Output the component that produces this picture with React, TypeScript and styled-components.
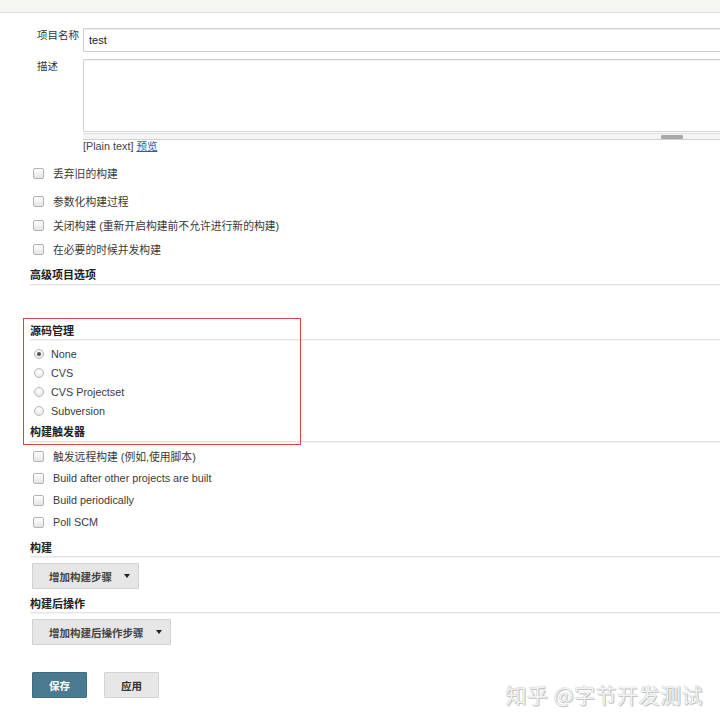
import React from 'react';
import styled, { createGlobalStyle } from 'styled-components';

const GlobalStyle = createGlobalStyle`
  html, body {
    margin: 0;
    padding: 0;
    background: #ffffff;
  }
  body {
    font-family: "Liberation Sans", Arial, "Noto Sans CJK SC", sans-serif;
    font-size: 10.8px;
    color: #3a3a3a;
    overflow: hidden;
  }
  * {
    box-sizing: border-box;
  }
`;

const Page = styled.div`
  position: relative;
  min-height: 726px;
  overflow: hidden;
`;

const TopBar = styled.div`
  height: 13px;
  background: #f6f7f2;
  border-bottom: 1px solid #e2e3de;
`;

const Form = styled.form`
  display: flex;
  flex-direction: column;
  padding: 15px 0 0 30px;
  margin-right: -20px;
`;

const FieldRow = styled.div<{ $top?: number }>`
  display: grid;
  grid-template-columns: 46px 1fr;
  padding-left: 7px;
  margin-top: ${({ $top }) => $top ?? 0}px;
`;

const FieldLabel = styled.label`
  font-family: "Noto Sans CJK SC", sans-serif;
  font-size: 10.5px;
  line-height: 13px;
  color: #333;
`;

const TextInput = styled.input`
  height: 24px;
  border: 1px solid #cfcfcf;
  border-radius: 1px;
  padding: 0 5px;
  font-family: "Liberation Sans", Arial, sans-serif;
  font-size: 11px;
  color: #222;
  outline: none;
  box-shadow: inset 0 1px 1px #eeeeee;
`;

const FieldBody = styled.div`
  display: flex;
  flex-direction: column;
`;

const TextArea = styled.textarea`
  height: 73px;
  border: 1px solid #d3d3d3;
  border-radius: 1px;
  resize: none;
  outline: none;
  box-shadow: inset 0 1px 1px #f0f0f0;
`;

const ResizeBar = styled.div`
  height: 7px;
  margin-top: 1px;
  border-top: 1px solid #dcdcdc;
  border-bottom: 1px solid #d0d0d0;
  background: #f4f4f4;
  display: flex;
  justify-content: flex-end;
  padding-right: 57px;
`;

const Grip = styled.span`
  width: 22px;
  height: 4px;
  margin-top: 1px;
  background: #a9a9a9;
  border-radius: 1px;
`;

const Hint = styled.div`
  line-height: 12px;
  color: #444;
  font-size: 10.8px;
`;

const PreviewLink = styled.a`
  color: #2a5db0;
  text-decoration: underline;
  font-family: "Noto Sans CJK SC", sans-serif;
  font-size: 10.5px;
  margin-left: 3px;
`;

const OptionList = styled.div<{ $top: number }>`
  display: flex;
  flex-direction: column;
  margin-top: ${({ $top }) => $top}px;
`;

const OptionRow = styled.label<{ $h: number; $after?: number }>`
  display: flex;
  align-items: center;
  gap: 9px;
  height: ${({ $h }) => $h}px;
  padding-left: 3px;
  margin-bottom: ${({ $after }) => $after ?? 0}px;
  color: #3a3a3a;
`;

const Check = styled.input.attrs({ type: 'checkbox' })`
  appearance: none;
  margin: 0;
  width: 11px;
  height: 11px;
  border: 1px solid #b3b3b3;
  border-radius: 2px;
  background: linear-gradient(#ffffff, #e4e4e4);
`;

const Radio = styled.input.attrs({ type: 'radio' })`
  appearance: none;
  margin: 0 0 0 1px;
  width: 10px;
  height: 10px;
  border: 1px solid #b8b8b8;
  border-radius: 50%;
  background: radial-gradient(circle at 50% 35%, #ffffff, #e2e2e2);
  display: grid;
  place-items: center;

  &:checked::after {
    content: '';
    width: 4px;
    height: 4px;
    border-radius: 50%;
    background: #555;
  }
`;

const RadioText = styled.span`
  margin-left: -2px;
`;

const Heading = styled.div<{ $top: number; $pad: number }>`
  margin-top: ${({ $top }) => $top}px;
  padding-bottom: ${({ $pad }) => $pad}px;
  font-family: "Noto Sans CJK SC", sans-serif;
  font-weight: 700;
  font-size: 11px;
  line-height: 14px;
  color: #222;
  border-bottom: 1px solid #e3e3e3;
  box-shadow: 0 1px 0 #f4f4f4;
`;

const Actions = styled.div<{ $top: number }>`
  display: flex;
  gap: 17px;
  margin-top: ${({ $top }) => $top}px;
  padding-left: 2px;
`;

const DropButton = styled.button`
  display: flex;
  align-items: center;
  gap: 12px;
  height: 26px;
  padding: 0 8px 0 16px;
  border: 1px solid #d2d2d2;
  border-radius: 1px;
  background: #e6e6e6;
  font-family: "Noto Sans CJK SC", sans-serif;
  font-size: 10.5px;
  font-weight: 700;
  color: #444;
`;

const Caret = styled.span`
  width: 0;
  height: 0;
  border-left: 3px solid transparent;
  border-right: 3px solid transparent;
  border-top: 4px solid #222;
`;

const SubmitButton = styled.button<{ $primary?: boolean }>`
  width: 55px;
  height: 26px;
  border: 1px solid ${({ $primary }) => ($primary ? '#416c80' : '#d3d3d3')};
  border-radius: 1px;
  background: ${({ $primary }) => ($primary ? '#4a7a90' : '#e7e7e7')};
  color: ${({ $primary }) => ($primary ? '#ffffff' : '#333333')};
  font-family: "Noto Sans CJK SC", sans-serif;
  font-size: 10.5px;
  font-weight: 700;
`;

const Annotation = styled.div`
  position: absolute;
  left: 23px;
  top: 318px;
  width: 278px;
  height: 127px;
  border: 1px solid #d0474a;
  pointer-events: none;
`;

const Watermark = styled.div`
  position: absolute;
  right: 17px;
  bottom: 20px;
  font-family: "Noto Sans CJK SC", sans-serif;
  font-size: 21px;
  line-height: 24px;
  color: #f3f3f3;
  text-shadow: 0 0 1px #a5a5a5, 1px 1px 0 #c8c8c8;
  letter-spacing: 0.5px;
`;

const generalOptions = [
  '丢弃旧的构建',
  '参数化构建过程',
  '关闭构建 (重新开启构建前不允许进行新的构建)',
  '在必要的时候并发构建',
];

const scmOptions = ['None', 'CVS', 'CVS Projectset', 'Subversion'];

const triggers = [
  '触发远程构建 (例如,使用脚本)',
  'Build after other projects are built',
  'Build periodically',
  'Poll SCM',
];

export default function App() {
  return (
    <Page>
      <GlobalStyle />
      <TopBar />
      <Form onSubmit={(e) => e.preventDefault()}>
        <FieldRow>
          <FieldLabel htmlFor="name">项目名称</FieldLabel>
          <TextInput id="name" defaultValue="test" />
        </FieldRow>
        <FieldRow $top={7}>
          <FieldLabel htmlFor="desc">描述</FieldLabel>
          <FieldBody>
            <TextArea id="desc" />
            <ResizeBar>
              <Grip />
            </ResizeBar>
            <Hint>
              [Plain text]<PreviewLink href="#">预览</PreviewLink>
            </Hint>
          </FieldBody>
        </FieldRow>

        <OptionList $top={9}>
          {generalOptions.map((text, i) => (
            <OptionRow key={text} $h={24} $after={i === 0 ? 4 : 0}>
              <Check />
              <span>{text}</span>
            </OptionRow>
          ))}
        </OptionList>

        <Heading $top={6} $pad={3}>高级项目选项</Heading>

        <Heading $top={38} $pad={2}>源码管理</Heading>
        <OptionList $top={4}>
          {scmOptions.map((text, i) => (
            <OptionRow key={text} $h={19}>
              <Radio name="scm" defaultChecked={i === 0} />
              <RadioText>{text}</RadioText>
            </OptionRow>
          ))}
        </OptionList>

        <Heading $top={4} $pad={3}>构建触发器</Heading>
        <OptionList $top={3}>
          {triggers.map((text) => (
            <OptionRow key={text} $h={22}>
              <Check />
              <span>{text}</span>
            </OptionRow>
          ))}
        </OptionList>

        <Heading $top={7} $pad={2}>构建</Heading>
        <Actions $top={6}>
          <DropButton type="button">
            增加构建步骤
            <Caret />
          </DropButton>
        </Actions>

        <Heading $top={7} $pad={2}>构建后操作</Heading>
        <Actions $top={6}>
          <DropButton type="button">
            增加构建后操作步骤
            <Caret />
          </DropButton>
        </Actions>

        <Actions $top={27}>
          <SubmitButton $primary type="submit">保存</SubmitButton>
          <SubmitButton type="button">应用</SubmitButton>
        </Actions>
      </Form>
      <Annotation />
      <Watermark>知乎 @字节开发测试</Watermark>
    </Page>
  );
}
